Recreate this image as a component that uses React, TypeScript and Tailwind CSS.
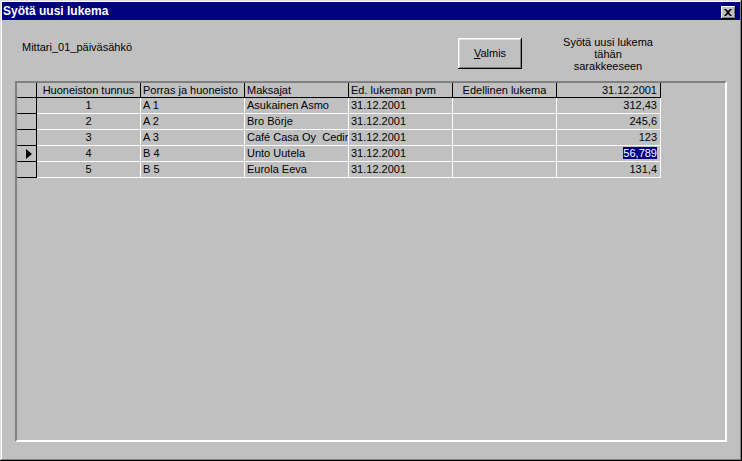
const cols = [
  { title: "Huoneiston tunnus", align: "center" },
  { title: "Porras ja huoneisto", align: "left" },
  { title: "Maksajat", align: "left" },
  { title: "Ed. lukeman pvm", align: "left" },
  { title: "Edellinen lukema", align: "center" },
  { title: "31.12.2001", align: "right" },
];

const rows = [
  ["1", "A 1", "Asukainen Asmo", "31.12.2001", "", "312,43"],
  ["2", "A 2", "Bro Börje", "31.12.2001", "", "245,6"],
  ["3", "A 3", "Café Casa Oy  Cedir", "31.12.2001", "", "123"],
  ["4", "B 4", "Unto Uutela", "31.12.2001", "", "56,789"],
  ["5", "B 5", "Eurola Eeva", "31.12.2001", "", "131,4"],
];

const alignClass: Record<string, string> = {
  left: "text-left pl-[2px]",
  center: "text-center",
  right: "text-right pr-[3px]",
};

export default function App() {
  return (
    <div className="w-[742px] h-[461px] bg-[#c0c0c0] p-[2px] flex flex-col font-['Liberation_Sans',Arial,sans-serif] text-[11px] text-black shadow-[inset_-1px_-1px_0_#000,inset_1px_1px_0_#dfdfdf,inset_-2px_-2px_0_#808080,inset_2px_2px_0_#fff]">
      {/* title bar */}
      <div className="h-[18px] bg-[#000080] flex items-start justify-between pl-[1px] pr-[4px]">
        <span className="text-white font-bold text-[12px] leading-[18px]">Syötä uusi lukema</span>
        <button className="mt-[4px] w-[15px] h-[13px] bg-[#c0c0c0] flex items-center justify-center shadow-[inset_-1px_-1px_0_#000,inset_1px_1px_0_#fff,inset_-2px_-2px_0_#808080]">
          <svg width="8" height="7" viewBox="0 0 8 7" className="-mt-[1px] -ml-[1px]">
            <path d="M0 0h2l2 2 2-2h2L5 3.5 8 7H6L4 5 2 7H0l3-3.5z" fill="#000" />
          </svg>
        </button>
      </div>

      {/* body */}
      <div className="flex-1 flex flex-col">
        <div className="h-[61px] flex items-start">
          <div className="w-[456px] pl-[20px] pt-[21px] leading-[13px]">Mittari_01_päiväsähkö</div>
          <button className="mt-[18px] w-[64px] h-[31px] bg-[#c0c0c0] leading-[13px] shadow-[inset_-1px_-1px_0_#000,inset_1px_1px_0_#fff,inset_-2px_-2px_0_#808080,inset_2px_2px_0_#dfdfdf]">
            <span className="underline underline-offset-[1px]">V</span>almis
          </button>
          <div className="ml-[26px] w-[120px] pt-[16px] text-center leading-[12px]">
            <div>Syötä uusi lukema</div>
            <div>tähän</div>
            <div>sarakkeeseen</div>
          </div>
        </div>

        {/* datasheet */}
        <div className="ml-[13px] w-[712px] h-[361px] border-2 border-t-[#808080] border-l-[#808080] border-r-white border-b-white bg-[#c0c0c0]">
          <div className="flex h-[15px] leading-[14px]">
            <div className="w-[20px] border-r border-b border-black" />
            {cols.map((c) => (
              <div
                key={c.title}
                className={`w-[104px] border-r border-b border-black whitespace-nowrap overflow-hidden ${alignClass[c.align]}`}
              >
                {c.title}
              </div>
            ))}
          </div>
          {rows.map((r, ri) => (
            <div key={ri} className="flex h-[16px] leading-[15px]">
              <div className="w-[20px] border-r border-b border-black flex items-center pl-[9px]">
                {ri === 3 && (
                  <svg width="6" height="10" viewBox="0 0 6 10">
                    <path d="M0 0L6 5L0 10z" fill="#000" />
                  </svg>
                )}
              </div>
              {r.map((v, ci) => (
                <div
                  key={ci}
                  className={`w-[104px] border-r border-b border-white whitespace-pre overflow-hidden ${alignClass[cols[ci].align]}`}
                >
                  {ri === 3 && ci === 5 ? (
                    <span className="bg-[#000080] text-white">{v}</span>
                  ) : (
                    v
                  )}
                </div>
              ))}
            </div>
          ))}
        </div>
      </div>
    </div>
  );
}
